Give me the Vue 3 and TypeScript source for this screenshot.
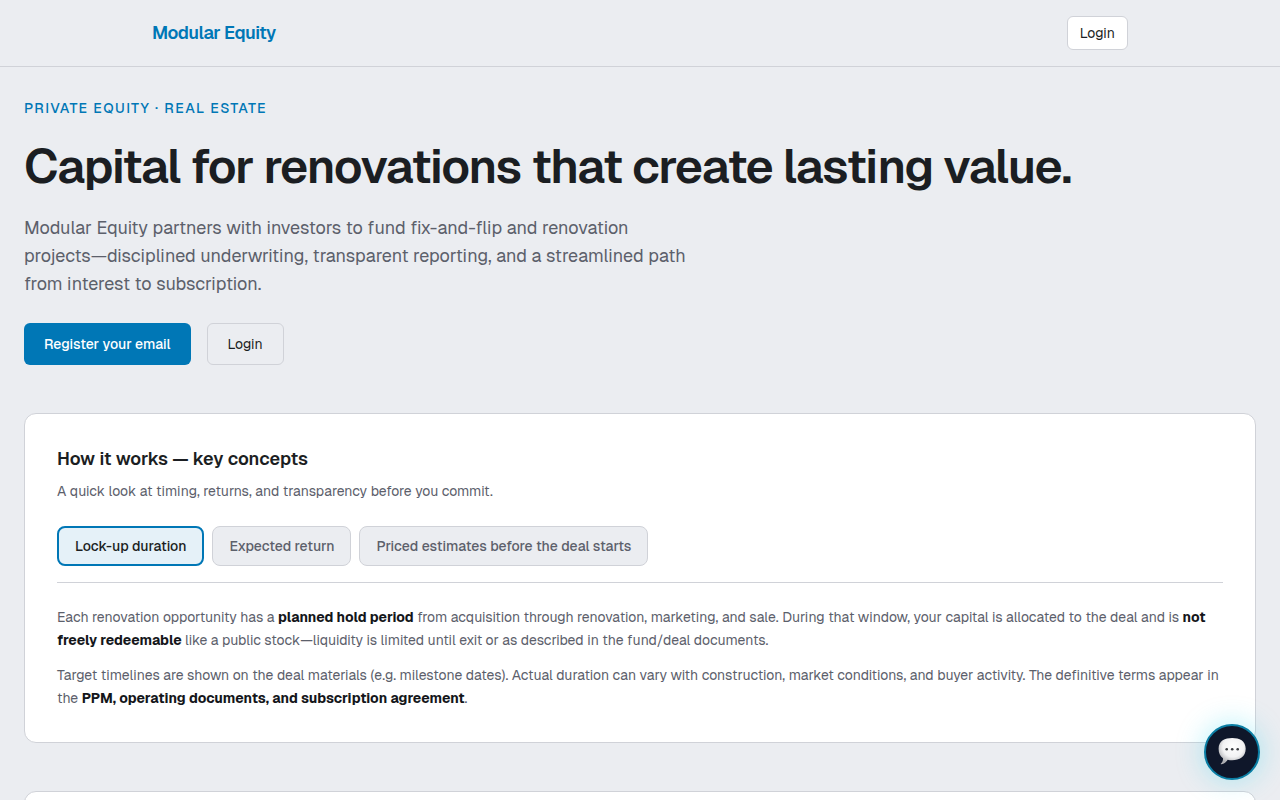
<script setup lang="ts">
import { ref } from 'vue'

interface Run { text: string; strong?: boolean }
interface Concept { id: string; label: string; paragraphs: Run[][] }

const concepts: Concept[] = [
  {
    id: 'lockup',
    label: 'Lock-up duration',
    paragraphs: [
      [
        { text: 'Each renovation opportunity has a ' },
        { text: 'planned hold period', strong: true },
        { text: ' from acquisition through renovation, marketing, and sale. During that window, your capital is allocated to the deal and is ' },
        { text: 'not freely redeemable', strong: true },
        { text: ' like a public stock—liquidity is limited until exit or as described in the fund/deal documents.' },
      ],
      [
        { text: 'Target timelines are shown on the deal materials (e.g. milestone dates). Actual duration can vary with construction, market conditions, and buyer activity. The definitive terms appear in the ' },
        { text: 'PPM, operating documents, and subscription agreement', strong: true },
        { text: '.' },
      ],
    ],
  },
  { id: 'return', label: 'Expected return', paragraphs: [] },
  { id: 'estimates', label: 'Priced estimates before the deal starts', paragraphs: [] },
]

const active = ref('lockup')
</script>

<template>
  <div class="page">
    <header class="topbar">
      <div class="topbar-inner">
        <a class="brand" href="#">Modular Equity</a>
        <a class="login" href="#login">Login</a>
      </div>
    </header>

    <main class="content">
      <section class="hero">
        <p class="eyebrow">Private equity · Real estate</p>
        <h1>Capital for renovations that create lasting value.</h1>
        <p class="lead">
          Modular Equity partners with investors to fund fix-and-flip and renovation
          projects—disciplined underwriting, transparent reporting, and a streamlined path
          from interest to subscription.
        </p>
        <div class="actions">
          <a class="action primary" href="#register">Register your email</a>
          <a class="action" href="#login">Login</a>
        </div>
      </section>

      <section class="card">
        <h2>How it works — key concepts</h2>
        <p class="sub">A quick look at timing, returns, and transparency before you commit.</p>
        <div class="tabs" role="tablist" aria-label="Key concepts">
          <button
            v-for="c in concepts"
            :id="`tab-${c.id}`"
            :key="c.id"
            type="button"
            role="tab"
            class="tab"
            :class="{ selected: active === c.id }"
            :aria-selected="active === c.id"
            @click="active = c.id"
          >{{ c.label }}</button>
        </div>
        <template v-for="c in concepts" :key="c.id">
          <div v-if="active === c.id" class="panel" role="tabpanel" :aria-labelledby="`tab-${c.id}`">
            <p v-for="(p, i) in c.paragraphs" :key="i">
              <template v-for="(run, j) in p" :key="j"><strong v-if="run.strong">{{ run.text }}</strong><template v-else>{{ run.text }}</template></template>
            </p>
          </div>
        </template>
      </section>

      <section class="card next"></section>
    </main>

    <button class="chat" type="button" aria-label="Open chat">
      <svg viewBox="0 1 28 28" width="28" height="28" aria-hidden="true">
        <defs>
          <radialGradient id="bubble" cx="0.54" cy="0.34" r="0.64">
            <stop offset="0" stop-color="#ffffff" />
            <stop offset="0.6" stop-color="#f2f2f3" />
            <stop offset="1" stop-color="#adaeb2" />
          </radialGradient>
        </defs>
        <path
          d="M14.200 1C21.400 1 27.700 3.600 27.700 11.800C27.700 20 21.400 23.300 14.200 23.300C12.600 23.300 11.100 23.200 9.700 22.800C8.400 25 6 27 3.400 27.200C2.600 27.200 2.600 26.600 3.200 26.200C4.600 25 5.100 23 5 21.200C2 19.200 .6 16 .6 11.800C.6 3.600 7 1 14.200 1Z"
          fill="url(#bubble)"
        />
        <circle cx="8.700" cy="12.200" r="1.300" fill="#3a3c40" />
        <circle cx="14.200" cy="12.200" r="1.300" fill="#3a3c40" />
        <circle cx="19.700" cy="12.200" r="1.300" fill="#3a3c40" />
      </svg>
    </button>
  </div>
</template>

<style>
body {
  margin: 0;
  background: #ebedf1;
}
</style>

<style scoped>
.page {
  height: 100vh;
  overflow: hidden;
  background: #ebedf1;
  color: #1b1e22;
  font-family: Geist, Inter, "Liberation Sans", sans-serif;
  font-size: 14px;
  line-height: 20px;
}
h1, h2, p { margin: 0; }
a { color: inherit; text-decoration: none; }

.topbar { border-bottom: 1px solid #d0d2d8; }
.topbar-inner {
  display: flex;
  align-items: center;
  justify-content: space-between;
  box-sizing: border-box;
  max-width: 1024px;
  margin: 0 auto;
  padding: 16px 24px;
}
.brand {
  color: #0077b6;
  font-size: 18px;
  line-height: 28px;
  font-weight: 600;
  letter-spacing: -0.025em;
}
.login {
  padding: 6px 12px;
  border: 1px solid #d0d2d8;
  border-radius: 6px;
  background: #fff;
}

.content { padding: 31px 24px; }
.eyebrow {
  color: #0077b6;
  font-weight: 500;
  letter-spacing: 0.1em;
  text-transform: uppercase;
}
h1 {
  margin-top: 24px;
  font-size: 48px;
  line-height: 48px;
  font-weight: 600;
  letter-spacing: -0.025em;
}
.lead {
  max-width: 672px;
  margin-top: 24px;
  color: #5c606b;
  font-size: 18px;
  line-height: 28px;
}
.actions {
  display: flex;
  gap: 16px;
  margin-top: 25px;
}
.action {
  padding: 10px 20px;
  border: 1px solid #d0d2d8;
  border-radius: 6px;
}
.action.primary {
  padding: 11px 20px;
  border: 0;
  background: #0077b6;
  color: #fff;
  font-weight: 500;
}

.card {
  margin-top: 48px;
  padding: 32px;
  border: 1px solid #d0d2d8;
  border-radius: 12px;
  background: #fff;
}
h2 {
  font-size: 18px;
  line-height: 26px;
  font-weight: 600;
}
.sub {
  margin-top: 9px;
  color: #5c606b;
}
.tabs {
  display: flex;
  gap: 8px;
  margin-top: 25px;
  padding-bottom: 16px;
  border-bottom: 1px solid #d0d2d8;
}
.tab {
  height: 40px;
  padding: 0 16px;
  border: 1px solid #d0d2d8;
  border-radius: 8px;
  background: #ebedf1;
  color: #5c606b;
  font: inherit;
  font-weight: 500;
  cursor: pointer;
}
.tab.selected {
  border: 2px solid #0077b6;
  background: #e5f1f8;
  color: #1b1e22;
}
.panel {
  display: grid;
  gap: 12px;
  margin-top: 23px;
  color: #5c606b;
  line-height: 23px;
}
.panel strong { color: #14161a; font-weight: 700; }

.chat {
  position: fixed;
  right: 20px;
  bottom: 20px;
  display: grid;
  place-items: center;
  width: 56px;
  height: 56px;
  padding: 0;
  border: 2px solid #0a7ea4;
  border-radius: 50%;
  background: #0f172a;
  box-shadow: 0 0 28px rgba(34, 211, 238, 0.35);
  cursor: pointer;
}
</style>
